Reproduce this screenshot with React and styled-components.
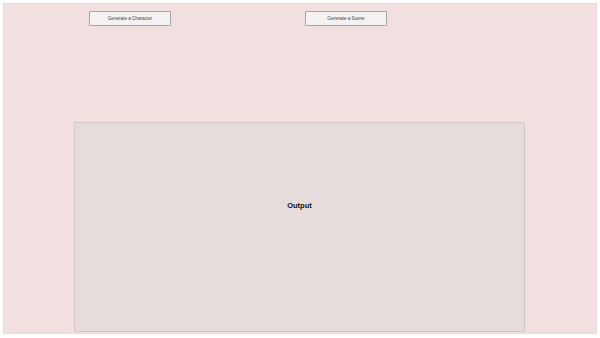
import styled, { createGlobalStyle } from 'styled-components';

const GlobalStyle = createGlobalStyle`
    html, body {
        margin: 0;
        padding: 0;
        background: #ffffff;
        font-family: "Liberation Sans", Arial, sans-serif;
    }
    #root {
        padding: 3px 3px 4px 3px;
        box-sizing: border-box;
        height: 338px;
    }
`;

const Page = styled.div`
    box-sizing: border-box;
    height: 331px;
    background: #f2dfe0;
    border: 1px solid #eadadb;
    display: flex;
    flex-direction: column;
`;

const ButtonRow = styled.div`
    display: flex;
    gap: 134px;
    padding: 7px 0 0 85px;
`;

const ActionButton = styled.button`
    box-sizing: border-box;
    width: 82px;
    height: 15px;
    padding: 0;
    background: #f3f1f1;
    border: 1px solid #a9a4a5;
    border-radius: 1px;
    font-family: "Liberation Sans", Arial, sans-serif;
    font-size: 4.6px;
    color: #444;
    display: flex;
    align-items: center;
    justify-content: center;
`;

const OutputPanel = styled.div`
    box-sizing: border-box;
    width: 451px;
    height: 210px;
    margin: 96px auto 0 70px;
    padding-top: 78px;
    background: #e7dcdc;
    border: 1px solid #d3c8c9;
    display: flex;
    align-items: flex-start;
    justify-content: center;
`;

const OutputLabel = styled.span`
    font-family: "Liberation Sans", Arial, sans-serif;
    font-weight: bold;
    font-size: 7.5px;
    color: #111;
`;

export default function App() {
    return (
        <>
            <GlobalStyle />
            <Page>
                <ButtonRow>
                    <ActionButton>Generate a Character</ActionButton>
                    <ActionButton>Generate a Scene</ActionButton>
                </ButtonRow>
                <OutputPanel>
                    <OutputLabel>Output</OutputLabel>
                </OutputPanel>
            </Page>
        </>
    );
}
